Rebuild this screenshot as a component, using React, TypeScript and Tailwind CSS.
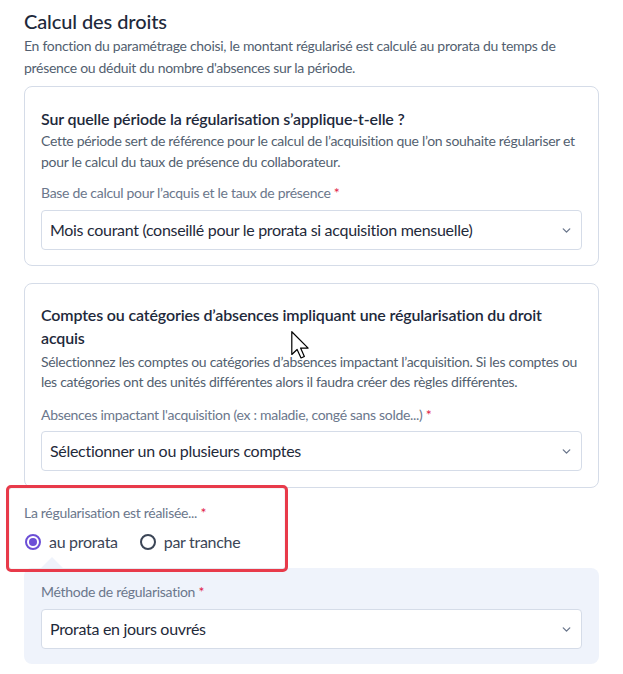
import { ChevronDown } from "lucide-react";

function Select({ value }: { value: string }) {
  return (
    <div className="flex h-[40px] items-center justify-between rounded-[4px] border border-[#d5dce8] bg-white pl-[8px] pr-[8px]">
      <span className="text-[16px] tracking-[-0.3px] text-[#1f2a3a]">{value}</span>
      <ChevronDown size={13} strokeWidth={2.5} className="text-[#6b778c]" />
    </div>
  );
}

function Label({ text }: { text: string }) {
  return (
    <div className="text-[14px] leading-[20px] tracking-[-0.3px] text-[#6b778c]">
      {text} <span className="text-[#e11d48]">*</span>
    </div>
  );
}

export default function App() {
  return (
    <div
      className="relative min-h-[674px] bg-white px-[24px] pt-[8px] text-[#1f2a3a]"
      style={{ fontFamily: "Lato, 'Noto Sans', sans-serif" }}
    >
      <h2 className="text-[20px] leading-[26px] font-medium tracking-[-0.1px] text-[#1e293b]">Calcul des droits</h2>
      <p className="mt-[1px] text-[14px] leading-[22px] tracking-[-0.3px] text-[#535f70]">
        En fonction du paramétrage choisi, le montant régularisé est calculé au prorata du temps de
        présence ou déduit du nombre d'absences sur la période.
      </p>

      {/* Période */}
      <div className="mt-[7px] rounded-[8px] border border-[#d5dce8] px-[16px] pt-[20px] pb-[15px]">
        <h3 className="text-[16px] leading-[23px] font-semibold tracking-[-0.15px] text-[#1e293b]">
          Sur quelle période la régularisation s’applique-t-elle ?
        </h3>
        <p className="text-[14px] leading-[21px] tracking-[-0.3px] text-[#535f70]">
          Cette période sert de référence pour le calcul de l’acquisition que l’on souhaite régulariser et
          pour le calcul du taux de présence du collaborateur.
        </p>
        <div className="mt-[11px]">
          <Label text="Base de calcul pour l’acquis et le taux de présence" />
        </div>
        <div className="mt-[7px]">
          <Select value="Mois courant (conseillé pour le prorata si acquisition mensuelle)" />
        </div>
      </div>

      {/* Absences */}
      <div className="mt-[17px] rounded-[8px] border border-[#d5dce8] px-[16px] pt-[19px] pb-[16px]">
        <h3 className="text-[16px] leading-[23px] font-semibold tracking-[-0.15px] text-[#1e293b]">
          Comptes ou catégories d’absences impliquant une régularisation du droit acquis
        </h3>
        <p className="mt-[3px] text-[14px] leading-[20px] tracking-[-0.3px] text-[#535f70]">
          Sélectionnez les comptes ou catégories d’absences impactant l’acquisition. Si les comptes ou
          les catégories ont des unités différentes alors il faudra créer des règles différentes.
        </p>
        <div className="mt-[13px]">
          <Label text="Absences impactant l'acquisition (ex : maladie, congé sans solde...)" />
        </div>
        <div className="mt-[6px]">
          <Select value="Sélectionner un ou plusieurs comptes" />
        </div>
      </div>

      {/* Mode de régularisation */}
      <div className="relative pt-[15px]">
        <div className="pointer-events-none absolute left-[-18px] top-[-3px] h-[87px] w-[282px] rounded-[5px] border-[3px] border-[#e83a4a] shadow-[inset_0_0_1px_rgba(0,0,0,0.4)]" />
        <Label text="La régularisation est réalisée..." />
        <div className="mt-[7px] flex h-[24px] items-center gap-[22px]">
          <label className="flex items-center gap-[8px]">
            <span className="ml-[1px] flex h-[16px] w-[16px] items-center justify-center rounded-full border-2 border-[#6c4fd6]">
              <span className="h-[8px] w-[8px] rounded-full bg-[#6c4fd6]" />
            </span>
            <span className="text-[16px] tracking-[-0.3px] text-[#3b4556]">au prorata</span>
          </label>
          <label className="flex items-center gap-[8px]">
            <span className="h-[16px] w-[16px] rounded-full border-2 border-[#3b4556]" />
            <span className="text-[16px] tracking-[-0.3px] text-[#3b4556]">par tranche</span>
          </label>
        </div>
        <div className="ml-[17px] mt-[3px] h-0 w-0 border-x-[11px] border-b-[11px] border-x-transparent border-b-[#eff3fb]" />
        <div className="rounded-[8px] bg-[#eff3fb] px-[17px] pt-[14px] pb-[15px]">
          <Label text="Méthode de régularisation" />
          <div className="mt-[7px]">
            <Select value="Prorata en jours ouvrés" />
          </div>
        </div>
      </div>

      {/* mouse pointer */}
      <svg
        className="pointer-events-none absolute left-[291px] top-[331px]"
        width="19"
        height="28"
        viewBox="0 0 12.5 18.5"
      >
        <path
          d="M0.5 0.5 L0.5 15.5 L4 12.2 L6.6 17.8 L8.8 16.8 L6.3 11.3 L11.3 11.3 Z"
          fill="#fff"
          stroke="#000"
          strokeWidth="0.8"
          strokeLinejoin="round"
        />
      </svg>
    </div>
  );
}
